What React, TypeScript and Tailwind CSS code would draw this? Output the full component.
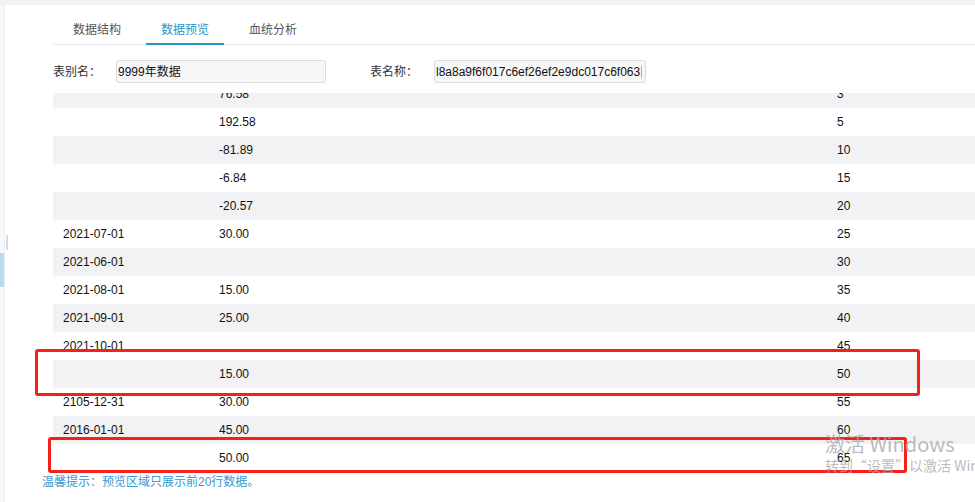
import React from 'react';

type Row = { date: string; amount: string; num: string };

const rows: Row[] = [
  { date: '', amount: '76.58', num: '3' },
  { date: '', amount: '192.58', num: '5' },
  { date: '', amount: '-81.89', num: '10' },
  { date: '', amount: '-6.84', num: '15' },
  { date: '', amount: '-20.57', num: '20' },
  { date: '2021-07-01', amount: '30.00', num: '25' },
  { date: '2021-06-01', amount: '', num: '30' },
  { date: '2021-08-01', amount: '15.00', num: '35' },
  { date: '2021-09-01', amount: '25.00', num: '40' },
  { date: '2021-10-01', amount: '', num: '45' },
  { date: '', amount: '15.00', num: '50' },
  { date: '2105-12-31', amount: '30.00', num: '55' },
  { date: '2016-01-01', amount: '45.00', num: '60' },
  { date: '', amount: '50.00', num: '65' },
];

const tabs = ['数据结构', '数据预览', '血统分析'];

const font = { fontFamily: '"Liberation Sans", "Noto Sans CJK SC", Arial, sans-serif' };

const App: React.FC = () => {
  return (
    <div className="relative w-[975px] h-[502px] overflow-hidden bg-[#f3f3f4] text-[12px] text-[#333]" style={font}>
      <div className="flex h-full pt-[5px]">
        {/* left rail peeking in */}
        <div className="w-[5px] flex-shrink-0 bg-[#f6f8fb] border-r border-[#eceff3] flex flex-col">
          <div className="h-[248px]" />
          <div className="h-[34px] bg-[#b5dcec]" />
        </div>
        <div className="flex-1 bg-white flex flex-col relative">
          <div className="absolute left-[1px] top-[230px] w-[2px] h-[15px] bg-[#dcdcdc]" />
          {/* tabs */}
          <div className="ml-[48px] mt-[10px] flex border-b border-[#e6e8eb] h-[30px]">
            <div className="w-[5px]" />
            {tabs.map((t, i) => (
              <div
                key={t}
                className={
                  'w-[78px] mr-[10px] flex items-start justify-center pt-[6px] text-[12px] ' +
                  (i === 1 ? 'text-[#2a94cc] border-b-2 border-[#2a94cc] -mb-[1px]' : 'text-[#555]')
                }
              >
                {t}
              </div>
            ))}
          </div>
          {/* form row */}
          <div className="ml-[48px] mt-[15px] flex items-center h-[23px]">
            <span className="w-[63px] text-[12px] text-[#333]">表别名：</span>
            <div className="w-[210px] h-[23px] rounded-[3px] border border-[#dcdcdc] bg-[#f7f7f7] flex items-center px-[1px] text-[12px] text-[#111]">
              9999年数据
            </div>
            <span className="ml-[44px] w-[64px] text-[12px] text-[#333]">表名称：</span>
            <div className="w-[212px] h-[23px] rounded-[3px] border border-[#dcdcdc] bg-[#f7f7f7] flex items-center pl-[1px] text-[12px] text-[#111] overflow-hidden whitespace-nowrap">
              l8a8a9f6f017c6ef26ef2e9dc017c6f063
              <span className="inline-block w-[1px] h-[12px] bg-[#f0a040] ml-[1px]" />
            </div>
          </div>
          {/* table */}
          <div className="ml-[48px] mt-[10px] h-[379px] overflow-hidden">
            <div className="-mt-[13px]">
              {rows.map((r, i) => (
                <div
                  key={i}
                  className={'flex items-center h-[28px] text-[12px] text-[#111] ' + (i % 2 === 0 ? 'bg-[#f2f2f4]' : 'bg-white')}
                >
                  <div className="w-[166px] pl-[10px]">{r.date}</div>
                  <div className="w-[618px]">{r.amount}</div>
                  <div className="flex-1">{r.num}</div>
                </div>
              ))}
            </div>
          </div>
          <div className="ml-[37px] mt-[1px] text-[12px] text-[#3a98d2]">温馨提示：预览区域只展示前20行数据。</div>
        </div>
      </div>

      {/* red annotation boxes */}
      <div className="absolute left-[35px] top-[349px] w-[885px] h-[47px] border-[3px] border-[#f5201a] rounded-[3px]" />
      <div className="absolute left-[48px] top-[437px] w-[859px] h-[36px] border-[3px] border-[#f5201a] rounded-[3px]" />

      {/* windows activation watermark */}
      <div className="absolute left-[825px] top-[434px] whitespace-nowrap text-[#a8a8a8]/80 leading-none" style={{ fontFamily: '"Noto Sans CJK SC", "Liberation Sans", sans-serif' }}>
        <div className="text-[20px]">激活 Windows</div>
        <div className="text-[14px] mt-[4px]">转到“设置”以激活 Windows。</div>
      </div>
    </div>
  );
};

export default App;
